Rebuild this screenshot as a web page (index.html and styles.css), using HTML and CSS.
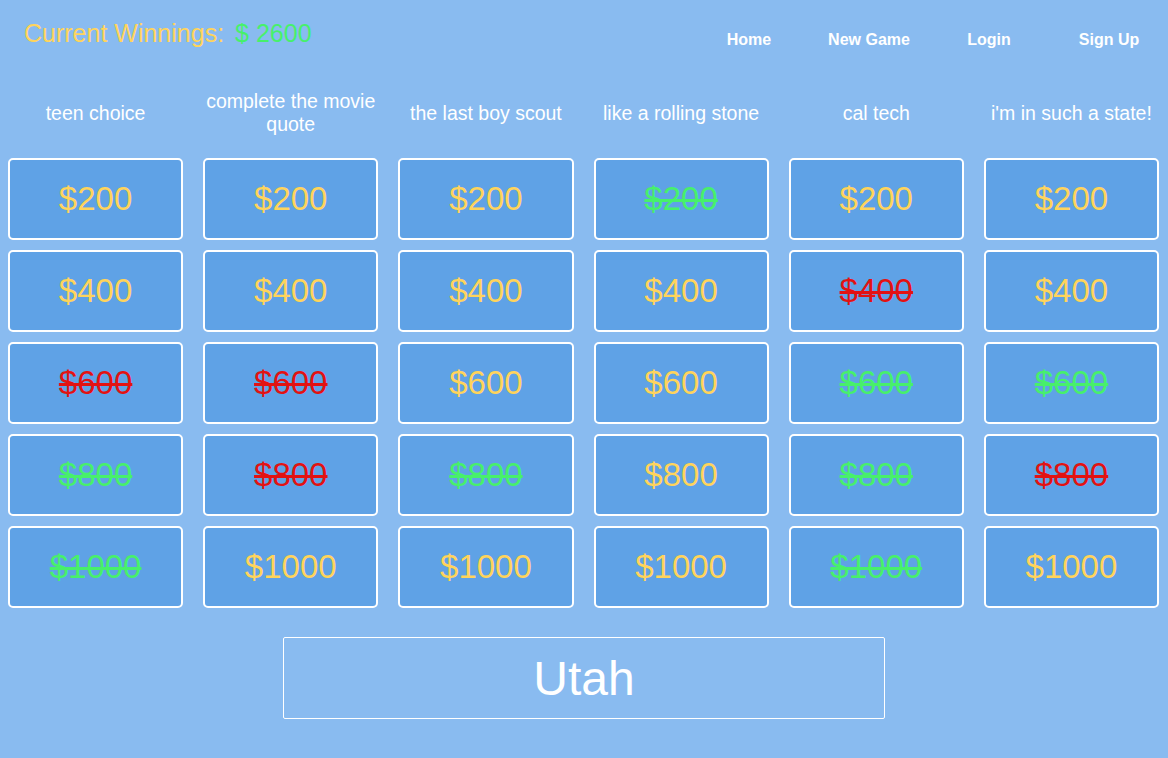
FILE: index.html
```html
<!DOCTYPE html>
<html>
<head>
<meta charset="utf-8">
<link rel="stylesheet" href="styles.css">
</head>
<body>
<div class="topbar">
  <div class="winnings">Current Winnings:<span class="amount">$ 2600</span></div>
  <nav class="nav">
    <a class="nav-item">Home</a>
    <a class="nav-item">New Game</a>
    <a class="nav-item">Login</a>
    <a class="nav-item">Sign Up</a>
  </nav>
</div>
<div class="categories">
  <div class="cat">teen choice</div>
  <div class="cat">complete the movie quote</div>
  <div class="cat">the last boy scout</div>
  <div class="cat">like a rolling stone</div>
  <div class="cat">cal tech</div>
  <div class="cat">i'm in such a state!</div>
</div>
<div class="board">
  <div class="cell">$200</div>
  <div class="cell">$200</div>
  <div class="cell">$200</div>
  <div class="cell right">$200</div>
  <div class="cell">$200</div>
  <div class="cell">$200</div>

  <div class="cell">$400</div>
  <div class="cell">$400</div>
  <div class="cell">$400</div>
  <div class="cell">$400</div>
  <div class="cell wrong">$400</div>
  <div class="cell">$400</div>

  <div class="cell wrong">$600</div>
  <div class="cell wrong">$600</div>
  <div class="cell">$600</div>
  <div class="cell">$600</div>
  <div class="cell right">$600</div>
  <div class="cell right">$600</div>

  <div class="cell right">$800</div>
  <div class="cell wrong">$800</div>
  <div class="cell right">$800</div>
  <div class="cell">$800</div>
  <div class="cell right">$800</div>
  <div class="cell wrong">$800</div>

  <div class="cell right">$1000</div>
  <div class="cell">$1000</div>
  <div class="cell">$1000</div>
  <div class="cell">$1000</div>
  <div class="cell right">$1000</div>
  <div class="cell">$1000</div>
</div>
<div class="answer">Utah</div>
</body>
</html>
```

FILE: styles.css
```css
html, body {
  margin: 0;
  padding: 0;
}
body {
  background: #89bbf0;
  font-family: "Liberation Sans", Arial, Helvetica, sans-serif;
  color: #ffffff;
  width: 1168px;
  height: 758px;
  overflow: hidden;
}
.topbar {
  display: flex;
  justify-content: space-between;
  align-items: flex-start;
  height: 84px;
}
.winnings {
  padding: 18px 0 0 24px;
  font-size: 25px;
  line-height: 30px;
  color: #ffd45b;
}
.amount {
  margin-left: 11px;
  color: #47f06b;
}
.nav {
  display: flex;
  padding-top: 29px;
  margin-right: -1px;
}
.nav-item {
  width: 120px;
  text-align: center;
  font-size: 16px;
  font-weight: bold;
  line-height: 22px;
  color: #ffffff;
}
.categories,
.board {
  display: grid;
  grid-template-columns: repeat(6, 1fr);
  column-gap: 20px;
  padding: 0 9px 0 8px;
}
.categories {
  height: 58px;
  margin-bottom: 16px;
  align-items: center;
}
.cat {
  text-align: center;
  font-size: 19.5px;
  line-height: 23px;
}
.board {
  row-gap: 10px;
}
.cell {
  height: 78px;
  border: 2px solid #ffffff;
  border-radius: 5px;
  background: #5fa2e6;
  display: flex;
  align-items: center;
  justify-content: center;
  font-size: 33px;
  color: #ffd45b;
}
.cell.right {
  color: #47f06b;
  text-decoration: line-through;
  text-decoration-thickness: 3px;
}
.cell.wrong {
  color: #e31212;
  text-decoration: line-through;
  text-decoration-thickness: 3px;
}
.answer {
  width: 600px;
  height: 80px;
  margin: 29px auto 0;
  border: 1px solid #ffffff;
  border-radius: 2px;
  display: flex;
  align-items: center;
  justify-content: center;
  font-size: 48px;
}
```
